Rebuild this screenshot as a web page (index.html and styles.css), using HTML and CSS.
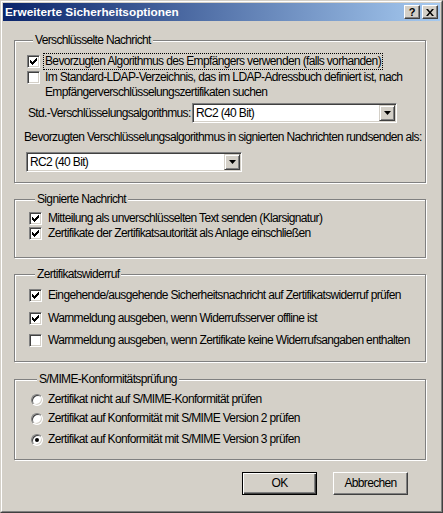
FILE: index.html
```html
<!DOCTYPE html>
<html lang="de">
<head>
<meta charset="utf-8">
<title>Erweiterte Sicherheitsoptionen</title>
<link rel="stylesheet" href="styles.css">
</head>
<body>
<div class="window">
  <div class="frame">
    <div class="titlebar">
      <span class="title">Erweiterte Sicherheitsoptionen</span>
      <div class="tbtns">
        <span class="tbtn help">?</span>
        <span class="tbtn close"><svg width="8" height="7" viewBox="0 0 8 7"><path d="M0 0h2l2 2.4L6 0h2L5 3.5 8 7H6L4 4.6 2 7H0l3-3.5z" fill="#000"/></svg></span>
      </div>
    </div>
    <div class="content">
      <div class="group g1">
        <span class="legend">Verschlüsselte Nachricht</span>
        <label class="opt r1"><span class="box checked"><svg width="13" height="13" viewBox="0 0 13 13"><path d="M9 3h1v1H9zM8 4h2v1H8zM3 5h1v1H3zM7 5h3v1H7zM3 6h2v1H3zM6 6h3v1H6zM3 7h5v1H3zM4 8h3v1H4zM5 9h1v1H5z" fill="#000"/></svg></span><span class="txt focus">Bevorzugten Algorithmus des Empfängers verwenden (falls vorhanden)</span></label>
        <label class="opt r2"><span class="box"></span><span class="txt">Im Standard-LDAP-Verzeichnis, das im LDAP-Adressbuch definiert ist, nach<br>Empfängerverschlüsselungszertifikaten suchen</span></label>
        <div class="row r3">
          <span class="lbl">Std.-Verschlüsselungsalgorithmus:</span>
          <div class="combo c1"><span class="val">RC2 (40 Bit)</span><span class="drop"><svg width="7" height="4" viewBox="0 0 7 4"><path d="M0 0h7L3.5 4z" fill="#000"/></svg></span></div>
        </div>
        <div class="lbl2">Bevorzugten Verschlüsselungsalgorithmus in signierten Nachrichten rundsenden als:</div>
        <div class="combo c2"><span class="val">RC2 (40 Bit)</span><span class="drop"><svg width="7" height="4" viewBox="0 0 7 4"><path d="M0 0h7L3.5 4z" fill="#000"/></svg></span></div>
      </div>

      <div class="group g2">
        <span class="legend">Signierte Nachricht</span>
        <label class="opt s1"><span class="box checked"><svg width="13" height="13" viewBox="0 0 13 13"><path d="M9 3h1v1H9zM8 4h2v1H8zM3 5h1v1H3zM7 5h3v1H7zM3 6h2v1H3zM6 6h3v1H6zM3 7h5v1H3zM4 8h3v1H4zM5 9h1v1H5z" fill="#000"/></svg></span><span class="txt">Mitteilung als unverschlüsselten Text senden (Klarsignatur)</span></label>
        <label class="opt s2"><span class="box checked"><svg width="13" height="13" viewBox="0 0 13 13"><path d="M9 3h1v1H9zM8 4h2v1H8zM3 5h1v1H3zM7 5h3v1H7zM3 6h2v1H3zM6 6h3v1H6zM3 7h5v1H3zM4 8h3v1H4zM5 9h1v1H5z" fill="#000"/></svg></span><span class="txt">Zertifikate der Zertifikatsautorität als Anlage einschließen</span></label>
      </div>

      <div class="group g3">
        <span class="legend">Zertifikatswiderruf</span>
        <label class="opt z1"><span class="box checked"><svg width="13" height="13" viewBox="0 0 13 13"><path d="M9 3h1v1H9zM8 4h2v1H8zM3 5h1v1H3zM7 5h3v1H7zM3 6h2v1H3zM6 6h3v1H6zM3 7h5v1H3zM4 8h3v1H4zM5 9h1v1H5z" fill="#000"/></svg></span><span class="txt">Eingehende/ausgehende Sicherheitsnachricht auf Zertifikatswiderruf prüfen</span></label>
        <label class="opt z2"><span class="box checked"><svg width="13" height="13" viewBox="0 0 13 13"><path d="M9 3h1v1H9zM8 4h2v1H8zM3 5h1v1H3zM7 5h3v1H7zM3 6h2v1H3zM6 6h3v1H6zM3 7h5v1H3zM4 8h3v1H4zM5 9h1v1H5z" fill="#000"/></svg></span><span class="txt">Warnmeldung ausgeben, wenn Widerrufsserver offline ist</span></label>
        <label class="opt z3"><span class="box"></span><span class="txt">Warnmeldung ausgeben, wenn Zertifikate keine Widerrufsangaben enthalten</span></label>
      </div>

      <div class="group g4">
        <span class="legend">S/MIME-Konformitätsprüfung</span>
        <label class="opt m1"><span class="radio"></span><span class="txt">Zertifikat nicht auf S/MIME-Konformität prüfen</span></label>
        <label class="opt m2"><span class="radio"></span><span class="txt">Zertifikat auf Konformität mit S/MIME Version 2 prüfen</span></label>
        <label class="opt m3"><span class="radio on"></span><span class="txt">Zertifikat auf Konformität mit S/MIME Version 3 prüfen</span></label>
      </div>

      <div class="buttons">
        <span class="btn default">OK</span>
        <span class="btn">Abbrechen</span>
      </div>
    </div>
  </div>
</div>
</body>
</html>
```
FILE: styles.css
```css
* { box-sizing: border-box; margin: 0; padding: 0; }
html, body { width: 443px; height: 513px; overflow: hidden; background: #d4d0c8; }
body {
  font-family: "Liberation Sans", Arial, sans-serif;
  font-size: 12px;
  letter-spacing: -0.65px;
  color: #000;
}
.window {
  width: 443px; height: 513px;
  border: 1px solid; border-color: #d4d0c8 #404040 #404040 #d4d0c8;
  background: #d4d0c8;
}
.frame {
  height: 100%;
  border: 1px solid; border-color: #fff #808080 #808080 #fff;
  padding: 1px;
  display: flex; flex-direction: column;
}
.titlebar {
  flex: none; height: 18px;
  background: linear-gradient(to right, #0a246a, #a6caf0);
  display: flex; align-items: center; justify-content: space-between;
  padding: 0 2px;
}
.title {
  font-weight: bold; font-size: 11.8px; color: #fff; line-height: 18px;
  letter-spacing: 0;
}
.tbtns { display: flex; gap: 2px; }
.tbtn {
  width: 16px; height: 14px; background: #d4d0c8;
  border: 1px solid; border-color: #fff #404040 #404040 #fff;
  box-shadow: inset -1px -1px #808080;
  display: flex; align-items: center; justify-content: center;
  font-weight: bold; font-size: 11px; line-height: 12px; letter-spacing: 0;
}
.tbtn svg { display: block; }

.content { flex: 1; display: flex; flex-direction: column; padding-left: 11px; }

.group {
  width: 412px; flex: none;
  border: 1px solid #808080;
  box-shadow: inset 1px 1px #fff, 1px 1px #fff;
  display: flex; flex-direction: column; align-items: flex-start;
}
.legend {
  margin: -8px 0 0 6px; padding: 0 2px;
  line-height: 14px; background: #d4d0c8; white-space: nowrap;
}
.g1 { margin-top: 19px; height: 143px; padding-left: 12px; }
.g2 { margin-top: 16px; height: 59px; padding-left: 14px; }
.g3 { margin-top: 16px; height: 88px; padding-left: 14px; }
.g4 { margin-top: 17px; height: 81px; padding-left: 16px; }

.opt { display: flex; align-items: center; white-space: nowrap; }
.txt { line-height: 15px; }
.box {
  flex: none; width: 13px; height: 13px; background: #fff;
  border: 1px solid; border-color: #808080 #fff #fff #808080;
  box-shadow: inset 1px 1px #404040, inset -1px -1px #d4d0c8;
  position: relative;
}
.box svg { position: absolute; left: -1px; top: -1px; display: block; }
.radio {
  flex: none; width: 12px; height: 12px; border-radius: 50%; background: #fff;
  border: 1px solid; border-color: #808080 #fff #fff #808080;
  box-shadow: inset 1px 1px #404040, inset -1px -1px #d4d0c8;
  display: flex; align-items: center; justify-content: center;
}
.radio.on::after { content: ""; width: 4px; height: 4px; border-radius: 50%; background: #000; }

.g1 .opt { gap: 3px; }
.g1 .txt { padding: 0 2px; }
.g1 .txt.focus { padding: 0 1px; border: 1px dotted #000; }
.r1 { margin-top: 6px; height: 17px; }
.r2 { align-items: flex-start; }
.r2 .box { margin-top: 1px; }
.row { display: flex; align-items: center; }
.r3 { margin-top: 3px; }
.lbl { width: 165px; padding-left: 1px; white-space: nowrap; }
.lbl2 { margin: 7px 0 0 -3px; line-height: 15px; white-space: nowrap; }

.combo {
  height: 20px; background: #fff;
  border: 1px solid; border-color: #808080 #fff #fff #808080;
  box-shadow: inset 1px 1px #404040, inset -1px -1px #d4d0c8;
  padding: 1px 1px 1px 2px;
  display: flex; align-items: center;
}
.c1 { width: 205px; }
.c2 { width: 216px; margin: 7px 0 0 -1px; }
.val { flex: 1; line-height: 16px; padding-left: 1px; }
.drop {
  flex: none; width: 16px; height: 16px; background: #d4d0c8;
  border: 1px solid; border-color: #d4d0c8 #404040 #404040 #d4d0c8;
  box-shadow: inset 1px 1px #fff, inset -1px -1px #808080;
  display: flex; align-items: center; justify-content: center;
}
.drop svg { display: block; }

.g2 .opt { gap: 6px; height: 15px; }
.s1 { margin-top: 5px; }

.g3 .opt { gap: 6px; height: 22px; }
.z1 { margin-top: 3px; }
.z2 { margin-top: 1px; }

.g4 .opt { gap: 5px; height: 15px; }
.m1 { margin-top: 6px; }
.m2 { margin-top: 4px; }
.m3 { margin-top: 6px; }

.buttons { display: flex; justify-content: flex-end; gap: 16px; margin-top: 12px; padding-right: 32px; }
.btn {
  width: 75px; height: 23px; background: #d4d0c8;
  border: 1px solid; border-color: #fff #404040 #404040 #fff;
  box-shadow: inset -1px -1px #808080;
  display: flex; align-items: center; justify-content: center;
  line-height: 15px;
}
.btn.default {
  border-color: #000;
  box-shadow: inset 1px 1px #fff, inset -1px -1px #404040, inset -2px -2px #808080;
}
```
